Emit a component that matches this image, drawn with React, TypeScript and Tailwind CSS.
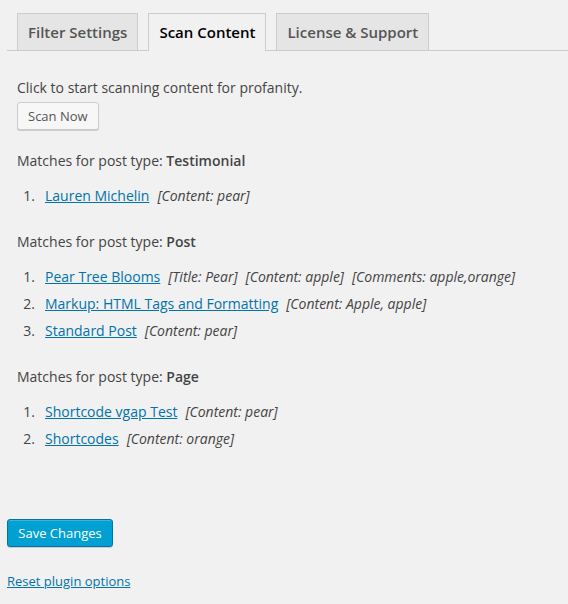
import React from "react";

type Item = { title: string; notes: string[] };
type Group = { type: string; items: Item[] };

const groups: Group[] = [
  { type: "Testimonial", items: [{ title: "Lauren Michelin", notes: ["[Content: pear]"] }] },
  {
    type: "Post",
    items: [
      { title: "Pear Tree Blooms", notes: ["[Title: Pear]", "[Content: apple]", "[Comments: apple,orange]"] },
      { title: "Markup: HTML Tags and Formatting", notes: ["[Content: Apple, apple]"] },
      { title: "Standard Post", notes: ["[Content: pear]"] },
    ],
  },
  {
    type: "Page",
    items: [
      { title: "Shortcode vgap Test", notes: ["[Content: pear]"] },
      { title: "Shortcodes", notes: ["[Content: orange]"] },
    ],
  },
];

export default function App() {
  return (
    <div
      className="w-[568px] h-[604px] bg-[#f1f1f1] text-[#444] text-[13px] leading-[20px] overflow-hidden"
      style={{ fontFamily: '"Open Sans", "Noto Sans", sans-serif' }}
    >
      <div className="pl-[7px]">
        <div className="flex gap-[10px] pl-[10px] pt-[13px] border-b border-[#ccc]">
          <div className="border border-b-0 border-[#ccc] bg-[#e5e5e5] text-[#555] px-[10px] py-[5px] text-[15px] leading-[26px] font-semibold">
            Filter Settings
          </div>
          <div className="border border-b-0 border-[#ccc] bg-[#f1f1f1] text-black px-[10px] py-[5px] text-[15px] leading-[26px] font-semibold -mb-px pb-[6px]">
            Scan Content
          </div>
          <div className="border border-b-0 border-[#ccc] bg-[#e5e5e5] text-[#555] px-[10px] py-[5px] text-[15px] leading-[26px] font-semibold">
            License &amp; Support
          </div>
        </div>

        <div className="pl-[10px] text-[14px] leading-[21px]">
          <p className="mt-[26px]">Click to start scanning content for profanity.</p>
          <button className="mt-[4px] h-[28px] px-[10px] pb-px text-[13px] leading-[26px] text-[#555] bg-[#f7f7f7] border border-[#ccc] rounded-[3px] shadow-[0_1px_0_#ccc]">
            Scan Now
          </button>

          {groups.map((g, gi) => (
            <div key={g.type} className={gi === 0 ? "mt-[20px]" : "mt-[25px]"}>
              <p>
                Matches for post type: <span className="font-semibold">{g.type}</span>
              </p>
              <ol className="mt-[14px] flex flex-col gap-[6px]">
                {g.items.map((it, i) => (
                  <li key={it.title} className="flex">
                    <span className="w-[18px] text-right">{i + 1}.</span>
                    <a href="#" className="ml-[10px] text-[#0073aa] underline">
                      {it.title}
                    </a>
                    {it.notes.map((n) => (
                      <span key={n} className="ml-[8px] italic">
                        {n}
                      </span>
                    ))}
                  </li>
                ))}
              </ol>
            </div>
          ))}
        </div>

        <button className="mt-[70px] h-[28px] w-[106px] pb-px text-[13px] leading-[26px] text-white bg-[#00a0d2] border border-[#0073aa] rounded-[3px] shadow-[inset_0_1px_0_rgba(120,200,230,0.5),0_1px_0_rgba(0,0,0,0.15)]">
          Save Changes
        </button>
        <div className="mt-[24px]">
          <a href="#" className="text-[#0073aa] underline">
            Reset plugin options
          </a>
        </div>
      </div>
    </div>
  );
}
